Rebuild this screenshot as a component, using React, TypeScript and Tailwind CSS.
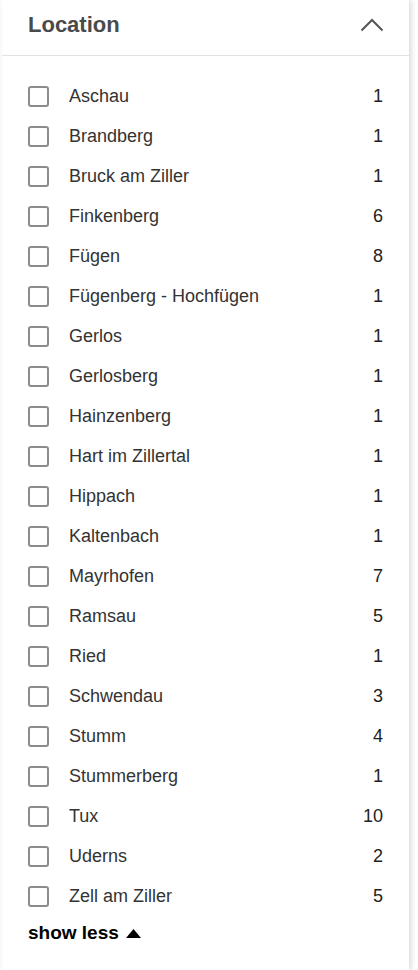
import React from 'react';

const locations: [string, number][] = [
  ['Aschau', 1],
  ['Brandberg', 1],
  ['Bruck am Ziller', 1],
  ['Finkenberg', 6],
  ['Fügen', 8],
  ['Fügenberg - Hochfügen', 1],
  ['Gerlos', 1],
  ['Gerlosberg', 1],
  ['Hainzenberg', 1],
  ['Hart im Zillertal', 1],
  ['Hippach', 1],
  ['Kaltenbach', 1],
  ['Mayrhofen', 7],
  ['Ramsau', 5],
  ['Ried', 1],
  ['Schwendau', 3],
  ['Stumm', 4],
  ['Stummerberg', 1],
  ['Tux', 10],
  ['Uderns', 2],
  ['Zell am Ziller', 5],
];

export default function App() {
  return (
    <div className="h-[970px] overflow-hidden bg-white font-['Liberation_Sans',Arial,sans-serif]">
      <div className="ml-[2px] w-[407px] h-[970px] bg-white shadow-[2px_0_6px_rgba(0,0,0,0.16)]">
        {/* Header */}
        <div className="flex h-[56px] items-center justify-between border-b border-[#e2e2e2] pl-[26px] pr-[26px] pb-[6px]">
          <h2 className="text-[22px] font-bold leading-none text-[#4a4a4a]">Location</h2>
          <svg width="24" height="14" viewBox="0 0 24 14" className="mr-[-1px]">
            <path d="M1.5 12.5 L12 2 L22.5 12.5" fill="none" stroke="#555" strokeWidth="2" />
          </svg>
        </div>

        {/* Options */}
        <ul className="pt-[20px]">
          {locations.map(([name, count]) => (
            <li key={name} className="flex h-[40px] items-center pl-[26px] pr-[26px]">
              <span className="h-[21px] w-[21px] shrink-0 rounded-[3px] border-2 border-[#8c8c8c] bg-white" />
              <span className="ml-[20px] flex-1 text-[18px] leading-none text-[#333]">{name}</span>
              <span className="text-[18px] leading-none text-[#222]">{count}</span>
            </li>
          ))}
        </ul>

        <button className="mt-[5px] flex h-[24px] items-center gap-[7px] pl-[26px] text-[19px] font-bold text-black">
          show less
          <svg width="15" height="9" viewBox="0 0 15 9">
            <path d="M7.5 0 L15 9 L0 9 Z" fill="#000" />
          </svg>
        </button>
      </div>
    </div>
  );
}
